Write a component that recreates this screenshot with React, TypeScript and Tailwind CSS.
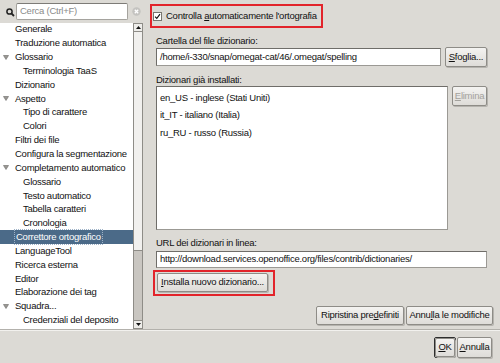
import React from "react";

type Node = { label: string; level: 0 | 1; open?: boolean; selected?: boolean };

const tree: Node[] = [
  { label: "Generale", level: 0 },
  { label: "Traduzione automatica", level: 0 },
  { label: "Glossario", level: 0, open: true },
  { label: "Terminologia TaaS", level: 1 },
  { label: "Dizionario", level: 0 },
  { label: "Aspetto", level: 0, open: true },
  { label: "Tipo di carattere", level: 1 },
  { label: "Colori", level: 1 },
  { label: "Filtri dei file", level: 0 },
  { label: "Configura la segmentazione", level: 0 },
  { label: "Completamento automatico", level: 0, open: true },
  { label: "Glossario", level: 1 },
  { label: "Testo automatico", level: 1 },
  { label: "Tabella caratteri", level: 1 },
  { label: "Cronologia", level: 1 },
  { label: "Correttore ortografico", level: 0, selected: true },
  { label: "LanguageTool", level: 0 },
  { label: "Ricerca esterna", level: 0 },
  { label: "Editor", level: 0 },
  { label: "Elaborazione dei tag", level: 0 },
  { label: "Squadra...", level: 0, open: true },
  { label: "Credenziali del deposito", level: 1 },
];

const dictionaries = ["en_US - inglese (Stati Uniti)", "it_IT - italiano (Italia)", "ru_RU - russo (Russia)"];

function Btn({
  children,
  className = "",
  disabled = false,
}: {
  children: React.ReactNode;
  className?: string;
  disabled?: boolean;
}) {
  return (
    <div
      className={`flex items-center justify-center rounded-[2px] border border-[#8e8c87] bg-gradient-to-b from-[#f4f3f1] to-[#dedcd8] shadow-[1px_1px_0_#b5b3ae] ${
        disabled ? "text-[#a3a19c]" : "text-[#111]"
      } ${className}`}
    >
      {children}
    </div>
  );
}

function Field({ value, className = "" }: { value: string; className?: string }) {
  return (
    <div
      className={`flex items-center whitespace-nowrap border border-[#9b9994] border-l-[#6f6d69] border-t-[#6f6d69] bg-white pl-[3px] ${className}`}
    >
      {value}
    </div>
  );
}

export default function App() {
  return (
    <div className="flex h-[363px] w-[500px] flex-col overflow-hidden bg-[#dcdad5] font-['Liberation_Sans',Arial,sans-serif] text-[9.5px] tracking-[-0.25px] text-[#111]">
      <div className="flex h-[329px]">
        {/* left: search + tree */}
        <div className="flex w-[143px] flex-col">
          <div className="flex h-[22.6px] items-center">
            <svg width="16" height="22" viewBox="0 0 16 22" className="ml-[2px]">
              <circle cx="7.5" cy="11.5" r="2.6" fill="none" stroke="#222" strokeWidth="1.5" />
              <line x1="9.4" y1="13.4" x2="12" y2="16" stroke="#222" strokeWidth="1.8" />
            </svg>
            <div className="ml-[-2px] flex h-[17px] w-[112px] items-center rounded-[2px] border border-[#a5a39e] border-t-[#7d7b77] bg-white pl-[3px] text-[#8a8a8a]">
              Cerca (Ctrl+F)
            </div>
            <svg width="9" height="9" viewBox="0 0 9 9" className="ml-[4px]">
              <circle cx="4.5" cy="4.5" r="4.2" fill="#c4c3c0" />
              <path d="M2.8 2.8 L6.2 6.2 M6.2 2.8 L2.8 6.2" stroke="#fff" strokeWidth="1.3" />
            </svg>
          </div>
          <div className="flex flex-1">
            <div className="flex w-[133px] flex-col bg-white">
              {tree.map((n, i) => (
                <div
                  key={i}
                  className={`flex h-[13.85px] shrink-0 items-center ${
                    n.selected ? "bg-[#4b6a88] text-white" : ""
                  }`}
                >
                  <div className="flex w-[14px] justify-center">
                    {n.open && n.level === 0 && (
                      <svg width="6" height="5" viewBox="0 0 6 5" className="ml-[-2px]">
                        <polygon points="0.5,0.5 5.5,0.5 3,4.5" fill="#9a9894" stroke="#6a6864" strokeWidth="0.6" />
                      </svg>
                    )}
                  </div>
                  <span
                    className={`whitespace-nowrap ${n.level === 1 ? "ml-[9px]" : "ml-[1px]"} ${
                      n.selected ? "px-[1px] outline outline-1 outline-dotted outline-[#9fb3c8]" : ""
                    }`}
                  >
                    {n.label}
                  </span>
                </div>
              ))}
            </div>
            {/* scrollbar */}
            <div className="flex w-[10px] flex-col border border-[#8e8c87] bg-[#c9c6c1]">
              <div className="flex h-[8px] items-center justify-center border-b border-[#8e8c87] bg-[#eeedea]">
                <svg width="5" height="3" viewBox="0 0 5 3">
                  <polygon points="0,3 5,3 2.5,0" fill="#111" />
                </svg>
              </div>
              <div className="h-[219px] border-b border-[#8e8c87] bg-[#f1f0ee]" />
              <div className="flex-1" />
              <div className="flex h-[8px] items-center justify-center border-t border-[#8e8c87] bg-[#eeedea]">
                <svg width="5" height="3" viewBox="0 0 5 3">
                  <polygon points="0,0 5,0 2.5,3" fill="#111" />
                </svg>
              </div>
            </div>
          </div>
        </div>

        {/* right: spell checker options */}
        <div className="flex flex-1 flex-col pl-[13px] pr-[7px]">
          <div className="ml-[-6px] mt-[4px] flex h-[24px] w-[173px] items-center border-2 border-[#e2242b] pl-[1px]">
            <div className="flex h-[9px] w-[9px] items-center justify-center border border-[#77756f] bg-white">
              <svg width="7" height="7" viewBox="0 0 7 7">
                <path d="M1 3.6 L2.8 5.4 L6 1.2" fill="none" stroke="#111" strokeWidth="1.1" />
              </svg>
            </div>
            <span className="ml-[4px] whitespace-nowrap">
              Controlla <span className="underline">a</span>utomaticamente l'ortografia
            </span>
          </div>

          <div className="mt-[8px] flex h-[11px] items-center">Cartella del file dizionario:</div>
          <div className="flex h-[20px] items-center gap-[4px]">
            <Field value="/home/i-330/snap/omegat-cat/46/.omegat/spelling" className="h-[18px] w-[285px]" />
            <Btn className="h-[19.5px] w-[42px]">
              <span>
                <span className="underline">S</span>foglia...
              </span>
            </Btn>
          </div>

          <div className="mt-[8px] flex h-[11px] items-center">Dizionari già installati:</div>
          <div className="flex h-[144px] items-start gap-[4px]">
            <div className="flex h-[144px] w-[292px] flex-col border border-[#9b9994] border-l-[#6f6d69] border-t-[#6f6d69] bg-white pl-[3px] pt-[2px]">
              {dictionaries.map((d) => (
                <div key={d} className="flex h-[17.5px] items-center">
                  {d}
                </div>
              ))}
            </div>
            <Btn disabled className="h-[20px] w-[35px]">
              <span>
                <span className="underline">E</span>limina
              </span>
            </Btn>
          </div>

          <div className="mt-[8px] flex h-[11px] items-center">URL dei dizionari in linea:</div>
          <Field
            value="http://download.services.openoffice.org/files/contrib/dictionaries/"
            className="mt-[1.5px] h-[17px] w-[331px]"
          />
          <div className="ml-[-3px] mt-[2px] flex h-[26px] w-[122px] items-center border-2 border-[#e2242b] pl-[2px]">
            <Btn className="h-[19.5px] w-[111px]">
              <span>
                <span className="underline">I</span>nstalla nuovo dizionario...
              </span>
            </Btn>
          </div>

          <div className="mt-[10px] flex justify-end gap-[2px]">
            <Btn className="h-[19px] w-[88px]">
              <span className="whitespace-nowrap">
                Ripristina pre<span className="underline">d</span>efiniti
              </span>
            </Btn>
            <Btn className="h-[19px] w-[87px]">
              <span className="whitespace-nowrap">
                Annu<span className="underline">l</span>la le modifiche
              </span>
            </Btn>
          </div>
        </div>
      </div>

      <div className="h-[2px] border-t border-[#b3b1ac] border-b border-b-[#f2f1ee]" />

      <div className="flex flex-1 items-start justify-end gap-[1px] pr-[8px] pt-[6px]">
        <div className="rounded-[2px] border border-[#2e2e2e]">
          <Btn className="h-[19px] w-[20px]">
            <span>
              <span className="underline">O</span>K
            </span>
          </Btn>
        </div>
        <Btn className="h-[21px] w-[35px]">
          <span>
            <span className="underline">A</span>nnulla
          </span>
        </Btn>
      </div>
    </div>
  );
}
